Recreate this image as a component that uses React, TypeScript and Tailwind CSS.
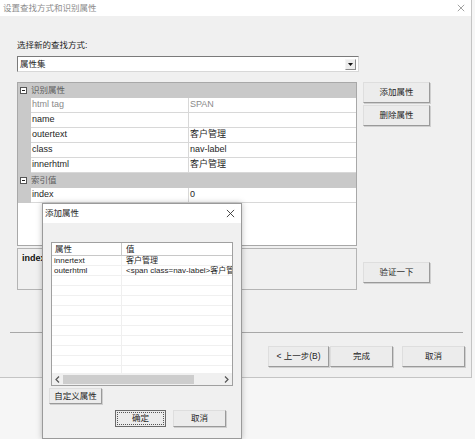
import React from 'react';

type Row = { name: string; value: string; dim?: boolean };

const attrRows: Row[] = [
  { name: 'html tag', value: 'SPAN', dim: true },
  { name: 'name', value: '' },
  { name: 'outertext', value: '客户管理' },
  { name: 'class', value: 'nav-label' },
  { name: 'innerhtml', value: '客户管理' },
];

const indexRows: Row[] = [{ name: 'index', value: '0' }];

const listRows = [
  { key: 'innertext', value: '客户管理' },
  { key: 'outerhtml', value: '<span class=nav-label>客户管' },
];

const WinButton: React.FC<{ children: React.ReactNode; className?: string; focused?: boolean }> = ({
  children,
  className = '',
  focused = false,
}) => (
  <button
    type="button"
    className={`flex items-center justify-center bg-[#ececec] text-[8.5px] leading-none text-[#1e1e1e] ${
      focused
        ? 'border border-[#6a6a6a]'
        : 'border border-t-[#dedede] border-l-[#dedede] border-r-[#9a9a9a] border-b-[#9a9a9a] shadow-[1px_1px_0_#cfcfcf]'
    } ${className}`}
  >
    {focused ? (
      <span className="flex h-[13px] w-[47px] items-center justify-center border border-dotted border-[#555]">
        {children}
      </span>
    ) : (
      children
    )}
  </button>
);

const Category: React.FC<{ label: string }> = ({ label }) => (
  <div className="flex h-[15px] items-center bg-[#c9c9c9]">
    <span className="ml-[2px] flex h-[7px] w-[7px] items-center justify-center border border-[#555] bg-white">
      <span className="h-px w-[3px] bg-[#222]" />
    </span>
    <span className="ml-[4px] text-[8.5px] text-[#5e5e5e]">{label}</span>
  </div>
);

const GridRow: React.FC<{ row: Row }> = ({ row }) => (
  <div className="flex h-[15px]">
    <div className="w-[13px] bg-[#c9c9c9]" />
    <div
      className={`flex w-[158px] items-center border-b border-r border-[#d8d8d8] pl-px text-[9px] ${
        row.dim ? 'text-[#8a8a8a]' : 'text-[#1e1e1e]'
      }`}
    >
      {row.name}
    </div>
    <div
      className={`flex flex-1 items-center border-b border-[#d8d8d8] pl-px text-[9px] ${
        row.dim ? 'text-[#8a8a8a]' : 'text-[#1e1e1e]'
      }`}
    >
      {row.value}
    </div>
  </div>
);

const CloseIcon: React.FC<{ color: string; size: number }> = ({ color, size }) => (
  <svg width={size} height={size} viewBox="0 0 10 10">
    <path d="M1 1 L9 9 M9 1 L1 9" stroke={color} strokeWidth="1" fill="none" />
  </svg>
);

const AddAttrDialog: React.FC = () => (
  <div className="absolute left-[42px] top-[203px] flex h-[236px] w-[200px] flex-col border border-[#9a9a9a] bg-[#f0f0f0] shadow-[0_0_6px_rgba(0,0,0,0.25)]">
    <div className="flex h-[19px] items-center justify-between bg-white pl-[2px] pr-[6px]">
      <span className="text-[8.5px] text-[#1e1e1e]">添加属性</span>
      <CloseIcon color="#333" size={9} />
    </div>

    <div className="ml-[8px] mt-[19px] flex h-[144px] w-[182px] flex-col border border-[#a0a0a0] bg-white">
      <div className="flex h-[13px] items-center border-b border-[#c8c8c8] text-[8.5px] text-[#1e1e1e]">
        <div className="flex h-full w-[70px] items-center border-r border-[#c8c8c8] pl-[3px]">属性</div>
        <div className="pl-[4px]">值</div>
      </div>
      <div className="flex-1 overflow-hidden">
        {Array.from({ length: 12 }).map((_, i) => {
          const item = listRows[i];
          return (
            <div key={i} className="flex h-[10px] items-center border-b border-[#f0f0f0] text-[8px] leading-none">
              <div className="flex h-full w-[70px] items-center border-r border-[#efefef] pl-[2px] text-[#1e1e1e]">
                {item ? item.key : ''}
              </div>
              <div className="h-full flex-1 overflow-hidden whitespace-nowrap pl-[4px] leading-[10px] text-[#1e1e1e]">
                {item ? item.value : ''}
              </div>
            </div>
          );
        })}
      </div>
      <div className="flex h-[12px] items-center bg-[#f0f0f0]">
        <div className="flex w-[11px] items-center justify-center">
          <svg width="5" height="7" viewBox="0 0 5 7">
            <path d="M4 0.5 L1 3.5 L4 6.5" stroke="#555" strokeWidth="1.2" fill="none" />
          </svg>
        </div>
        <div className="h-[9px] w-[131px] bg-[#cdcdcd]" />
        <div className="flex-1" />
        <div className="flex w-[11px] items-center justify-center">
          <svg width="5" height="7" viewBox="0 0 5 7">
            <path d="M1 0.5 L4 3.5 L1 6.5" stroke="#555" strokeWidth="1.2" fill="none" />
          </svg>
        </div>
      </div>
    </div>

    <WinButton className="ml-[6px] mt-[2px] h-[16px] w-[53px]">自定义属性</WinButton>

    <div className="mt-[6px] flex">
      <WinButton focused className="ml-[72px] h-[17px] w-[51px]">
        确定
      </WinButton>
      <WinButton className="ml-[7px] h-[17px] w-[53px]">取消</WinButton>
    </div>
  </div>
);

const App: React.FC = () => {
  return (
    <div className="relative h-[439px] w-[475px] overflow-hidden bg-[#f6f6f6] font-['Liberation_Sans','Noto_Sans_CJK_SC',sans-serif]">
      <div className="flex h-[378px] w-[472px] flex-col border-b border-r border-[#c4c4c4] bg-[#f0f0f0]">
        <div className="flex h-[16px] items-center justify-between bg-white pl-[3px] pr-[6px]">
          <span className="text-[8.5px] text-[#8c8c8c]">设置查找方式和识别属性</span>
          <CloseIcon color="#8a8a8a" size={8} />
        </div>

        <div className="flex flex-1 flex-col pl-[10px]">
          <div className="pl-[7px]">
            <div className="mt-[22px] h-[14px] text-[8.5px] leading-[14px] text-[#1e1e1e]">选择新的查找方式:</div>

            <div className="mt-[4px] flex h-[16px] w-[342px] items-center justify-between border border-t-[#7a7a7a] border-l-[#7a7a7a] border-r-[#d8d8d8] border-b-[#d8d8d8] bg-white pl-[2px] pr-[2px]">
              <span className="text-[8.5px] text-[#1e1e1e]">属性集</span>
              <span className="flex h-[11px] w-[11px] items-center justify-center border border-t-[#f4f4f4] border-l-[#f4f4f4] border-r-[#8a8a8a] border-b-[#8a8a8a] bg-[#ececec]">
                <svg width="5" height="3" viewBox="0 0 5 3">
                  <path d="M0 0 L5 0 L2.5 3 Z" fill="#111" />
                </svg>
              </span>
            </div>

            <div className="mt-[10px] flex">
              <div className="flex w-[340px] flex-col">
                <div className="flex h-[164px] flex-col border border-[#a8a8a8] bg-white">
                  <Category label="识别属性" />
                  {attrRows.map((r) => (
                    <GridRow key={r.name} row={r} />
                  ))}
                  <Category label="索引值" />
                  {indexRows.map((r) => (
                    <GridRow key={r.name} row={r} />
                  ))}
                </div>
                <div className="mt-[2px] h-[42px] border border-[#b4b4b4] bg-[#f0f0f0] pl-[4px] pt-[3px] text-[9px] leading-[12px]">
                  <span className="font-bold text-[#111]">index</span>
                </div>
              </div>

              <div className="ml-[6px] flex flex-col">
                <WinButton className="h-[21px] w-[67px]">添加属性</WinButton>
                <WinButton className="mt-[2px] h-[21px] w-[67px]">删除属性</WinButton>
                <WinButton className="mt-[136px] h-[21px] w-[67px]">验证一下</WinButton>
              </div>
            </div>
          </div>

          <div className="mr-[8px] mt-[42px] h-px bg-[#a8a8a8]" />

          <div className="mt-[13px] flex justify-end pr-[6px]">
            <WinButton className="h-[21px] w-[61px]">&lt; 上一步(B)</WinButton>
            <WinButton className="ml-px h-[21px] w-[63px]">完成</WinButton>
            <WinButton className="ml-[9px] h-[21px] w-[63px]">取消</WinButton>
          </div>
        </div>
      </div>

      <AddAttrDialog />
    </div>
  );
};

export default App;
